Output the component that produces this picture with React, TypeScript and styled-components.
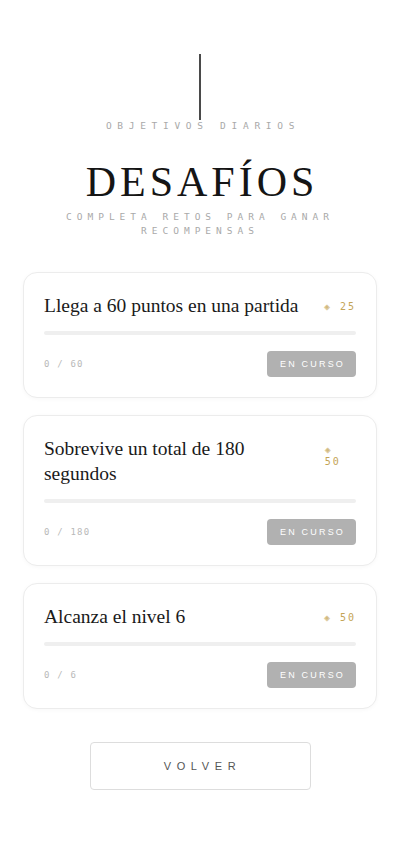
import React from 'react';
import styled, { createGlobalStyle } from 'styled-components';

interface Challenge {
  title: string;
  reward: number;
  progress: number;
  goal: number;
}

const challenges: Challenge[] = [
  { title: 'Llega a 60 puntos en una partida', reward: 25, progress: 0, goal: 60 },
  { title: 'Sobrevive un total de 180 segundos', reward: 50, progress: 0, goal: 180 },
  { title: 'Alcanza el nivel 6', reward: 50, progress: 0, goal: 6 },
];

const GlobalStyle = createGlobalStyle`
  html, body {
    margin: 0;
    padding: 0;
    background: #ffffff;
  }
  * {
    box-sizing: border-box;
  }
`;

const mono = `"DejaVu Sans Mono", "Liberation Mono", monospace`;

const Page = styled.div`
  width: 400px;
  min-height: 848px;
  padding: 54px 23px 40px;
  display: flex;
  flex-direction: column;
  align-items: center;
  background: #fff;
`;

const Divider = styled.div`
  width: 2px;
  height: 66px;
  background: #4a4a4a;
`;

const Eyebrow = styled.div`
  font-family: ${mono};
  font-size: 9.5px;
  line-height: 12px;
  letter-spacing: 5.7px;
  color: #a9a9a9;
  text-align: center;
  margin-left: 6px;
`;

const Title = styled.h1`
  margin: 25px 0 0;
  font-family: "Liberation Serif", serif;
  font-weight: 400;
  font-size: 42px;
  line-height: 50px;
  letter-spacing: 4px;
  color: #151515;
  text-align: center;
  margin-left: 4px;
`;

const Subtitle = styled.p`
  margin: 3px 0 0;
  font-family: ${mono};
  font-size: 9.5px;
  line-height: 14px;
  letter-spacing: 5px;
  color: #a9a9a9;
  text-align: center;
  max-width: 300px;
`;

const List = styled.div`
  width: 100%;
  margin-top: 34px;
  display: flex;
  flex-direction: column;
  gap: 17px;
`;

const Card = styled.div`
  border: 1px solid #ececec;
  border-radius: 14px;
  padding: 20px;
  background: #fff;
  box-shadow: 0 1px 4px rgba(0, 0, 0, 0.03);
`;

const Head = styled.div`
  display: flex;
  align-items: flex-start;
  gap: 10px;
`;

const ChallengeTitle = styled.div`
  flex: 1 1 auto;
  font-family: "Liberation Serif", serif;
  font-size: 19.5px;
  line-height: 25px;
  color: #1a1a1a;
`;

const Reward = styled.div`
  flex: 0 1 auto;
  margin-top: 8px;
  font-family: ${mono};
  font-size: 10px;
  line-height: 12px;
  letter-spacing: 2px;
  color: #c4a456;
`;

const Diamond = styled.span`
  font-size: 10px;
  opacity: 0.75;
`;

const Track = styled.div`
  margin-top: 13px;
  height: 4px;
  border-radius: 2px;
  background: #efefef;
  overflow: hidden;
`;

const Fill = styled.div`
  height: 100%;
  background: #c4a456;
`;

const Footer = styled.div`
  margin-top: 16px;
  display: flex;
  align-items: center;
  justify-content: space-between;
`;

const Count = styled.span`
  font-family: ${mono};
  font-size: 9px;
  letter-spacing: 1.2px;
  color: #b9b9b9;
`;

const StatusButton = styled.button`
  width: 89px;
  height: 26px;
  border: none;
  border-radius: 4px;
  background: #b1b1b1;
  color: #fff;
  font-family: "Liberation Sans", Arial, sans-serif;
  font-size: 9px;
  letter-spacing: 2.2px;
  padding: 0 0 0 2px;
`;

const BackButton = styled.button`
  margin-top: 33px;
  width: 221px;
  height: 48px;
  border: 1px solid #dddddd;
  border-radius: 4px;
  background: #fff;
  color: #555;
  font-family: "Liberation Sans", Arial, sans-serif;
  font-size: 11px;
  letter-spacing: 5.6px;
  padding: 0 0 0 5px;
`;

export default function App() {
  return (
    <>
      <GlobalStyle />
      <Page>
        <Divider />
        <Eyebrow>OBJETIVOS DIARIOS</Eyebrow>
        <Title>DESAFÍOS</Title>
        <Subtitle>COMPLETA RETOS PARA GANAR RECOMPENSAS</Subtitle>
        <List>
          {challenges.map((c, index) => (
            <Card key={index}>
              <Head>
                <ChallengeTitle>{c.title}</ChallengeTitle>
                <Reward>
                  <Diamond>◈</Diamond> {c.reward}
                </Reward>
              </Head>
              <Track>
                <Fill style={{ width: `${(c.progress / c.goal) * 100}%` }} />
              </Track>
              <Footer>
                <Count>
                  {c.progress} / {c.goal}
                </Count>
                <StatusButton>EN CURSO</StatusButton>
              </Footer>
            </Card>
          ))}
        </List>
        <BackButton>VOLVER</BackButton>
      </Page>
    </>
  );
}
